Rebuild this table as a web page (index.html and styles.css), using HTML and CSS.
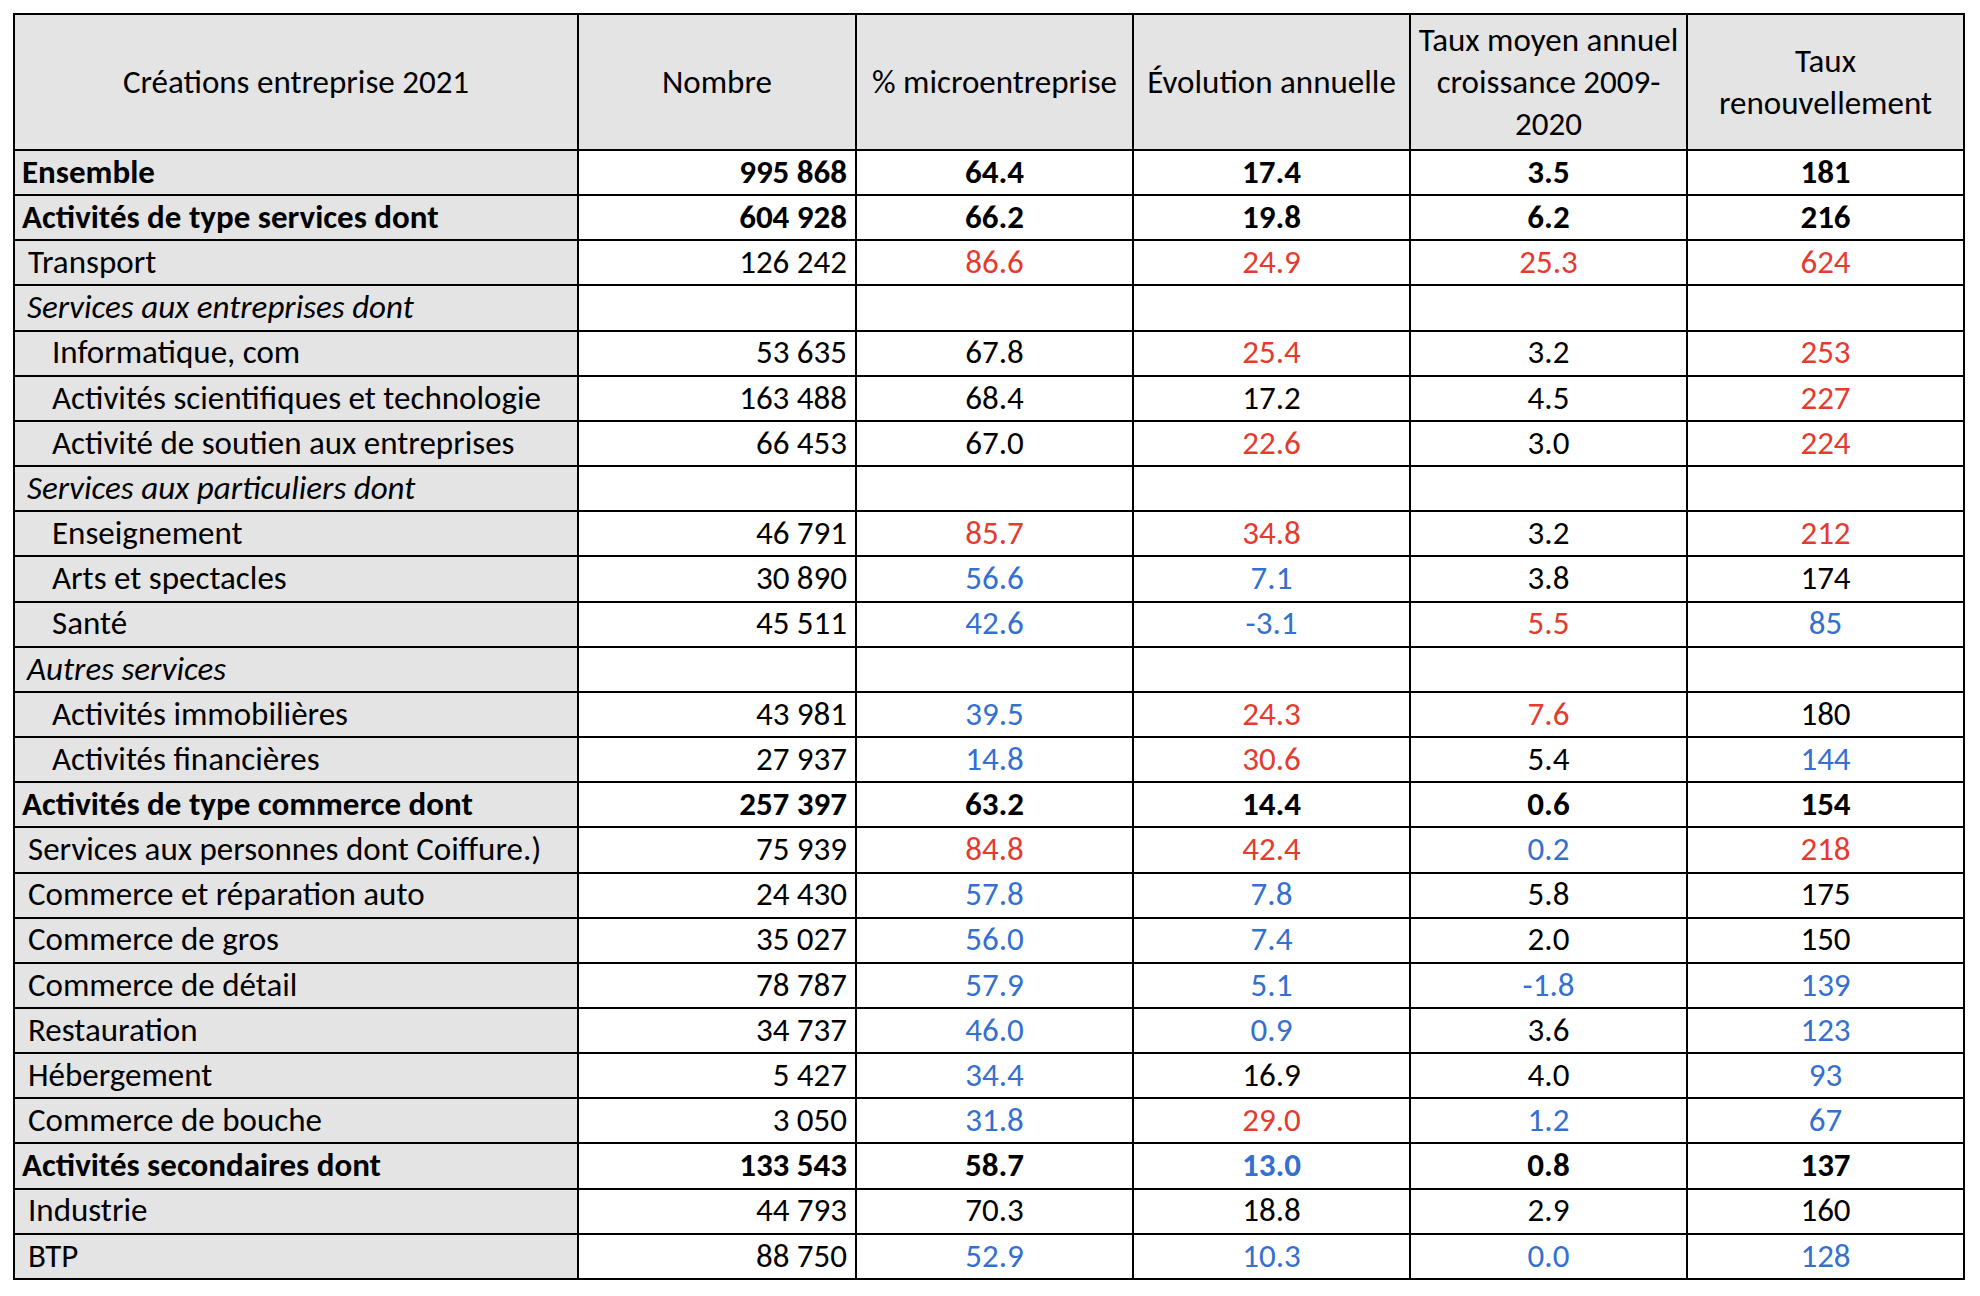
FILE: index.html
```html
<!DOCTYPE html>
<html lang="fr">
<head>
<meta charset="utf-8">
<title>Créations entreprise 2021</title>
<link rel="stylesheet" href="styles.css">
</head>
<body>
<table class="stats">
  <colgroup>
    <col class="c-label">
    <col class="c-num">
    <col class="c-val">
    <col class="c-val">
    <col class="c-val">
    <col class="c-val">
  </colgroup>
  <thead>
    <tr>
      <th>Créations entreprise 2021</th>
      <th>Nombre</th>
      <th>% microentreprise</th>
      <th>Évolution annuelle</th>
      <th>Taux moyen annuel<br>croissance 2009-<br>2020</th>
      <th>Taux<br>renouvellement</th>
    </tr>
  </thead>
  <tbody>
    <tr class="bold"><td class="lbl">Ensemble</td><td class="num">995 868</td><td>64.4</td><td>17.4</td><td>3.5</td><td>181</td></tr>
    <tr class="bold"><td class="lbl">Activités de type services dont</td><td class="num">604 928</td><td>66.2</td><td>19.8</td><td>6.2</td><td>216</td></tr>
    <tr><td class="lbl top">Transport</td><td class="num">126 242</td><td class="r">86.6</td><td class="r">24.9</td><td class="r">25.3</td><td class="r">624</td></tr>
    <tr class="group"><td class="lbl grp">Services aux entreprises dont</td><td></td><td></td><td></td><td></td><td></td></tr>
    <tr><td class="lbl sub">Informatique, com</td><td class="num">53 635</td><td>67.8</td><td class="r">25.4</td><td>3.2</td><td class="r">253</td></tr>
    <tr><td class="lbl sub">Activités scientifiques et technologie</td><td class="num">163 488</td><td>68.4</td><td>17.2</td><td>4.5</td><td class="r">227</td></tr>
    <tr><td class="lbl sub">Activité de soutien aux entreprises</td><td class="num">66 453</td><td>67.0</td><td class="r">22.6</td><td>3.0</td><td class="r">224</td></tr>
    <tr class="group"><td class="lbl grp">Services aux particuliers dont</td><td></td><td></td><td></td><td></td><td></td></tr>
    <tr><td class="lbl sub">Enseignement</td><td class="num">46 791</td><td class="r">85.7</td><td class="r">34.8</td><td>3.2</td><td class="r">212</td></tr>
    <tr><td class="lbl sub">Arts et spectacles</td><td class="num">30 890</td><td class="b">56.6</td><td class="b">7.1</td><td>3.8</td><td>174</td></tr>
    <tr><td class="lbl sub">Santé</td><td class="num">45 511</td><td class="b">42.6</td><td class="b">-3.1</td><td class="r">5.5</td><td class="b">85</td></tr>
    <tr class="group"><td class="lbl grp">Autres services</td><td></td><td></td><td></td><td></td><td></td></tr>
    <tr><td class="lbl sub">Activités immobilières</td><td class="num">43 981</td><td class="b">39.5</td><td class="r">24.3</td><td class="r">7.6</td><td>180</td></tr>
    <tr><td class="lbl sub">Activités financières</td><td class="num">27 937</td><td class="b">14.8</td><td class="r">30.6</td><td>5.4</td><td class="b">144</td></tr>
    <tr class="bold"><td class="lbl">Activités de type commerce dont</td><td class="num">257 397</td><td>63.2</td><td>14.4</td><td>0.6</td><td>154</td></tr>
    <tr><td class="lbl top">Services aux personnes dont Coiffure.)</td><td class="num">75 939</td><td class="r">84.8</td><td class="r">42.4</td><td class="b">0.2</td><td class="r">218</td></tr>
    <tr><td class="lbl top">Commerce et réparation auto</td><td class="num">24 430</td><td class="b">57.8</td><td class="b">7.8</td><td>5.8</td><td>175</td></tr>
    <tr><td class="lbl top">Commerce de gros</td><td class="num">35 027</td><td class="b">56.0</td><td class="b">7.4</td><td>2.0</td><td>150</td></tr>
    <tr><td class="lbl top">Commerce de détail</td><td class="num">78 787</td><td class="b">57.9</td><td class="b">5.1</td><td class="b">-1.8</td><td class="b">139</td></tr>
    <tr><td class="lbl top">Restauration</td><td class="num">34 737</td><td class="b">46.0</td><td class="b">0.9</td><td>3.6</td><td class="b">123</td></tr>
    <tr><td class="lbl top">Hébergement</td><td class="num">5 427</td><td class="b">34.4</td><td>16.9</td><td>4.0</td><td class="b">93</td></tr>
    <tr><td class="lbl top">Commerce de bouche</td><td class="num">3 050</td><td class="b">31.8</td><td class="r">29.0</td><td class="b">1.2</td><td class="b">67</td></tr>
    <tr class="bold"><td class="lbl">Activités secondaires dont</td><td class="num">133 543</td><td>58.7</td><td class="b">13.0</td><td>0.8</td><td>137</td></tr>
    <tr><td class="lbl top">Industrie</td><td class="num">44 793</td><td>70.3</td><td>18.8</td><td>2.9</td><td>160</td></tr>
    <tr><td class="lbl top">BTP</td><td class="num">88 750</td><td class="b">52.9</td><td class="b">10.3</td><td class="b">0.0</td><td class="b">128</td></tr>
  </tbody>
</table>
</body>
</html>
```

FILE: styles.css
```css
html, body {
  margin: 0;
  padding: 0;
  background: #ffffff;
}

body {
  padding: 13px 0 0 13px;
  font-family: Carlito, Lato, "Liberation Sans", sans-serif;
  font-size: 33px;
  color: #000000;
}

.stats {
  border-collapse: collapse;
  table-layout: fixed;
  width: 1952px;
}

.c-label { width: 564px; }
.c-num { width: 278px; }
.c-val { width: 277px; }

.stats th,
.stats td {
  border: 2px solid #000000;
  padding: 0 8px;
  line-height: 1.2;
  white-space: nowrap;
  overflow: hidden;
  text-align: center;
  vertical-align: middle;
}

.stats thead tr {
  height: 136px;
}

.stats th {
  background: #e4e4e4;
  font-weight: normal;
  line-height: 42px;
  padding: 0 2px;
}

.stats tbody tr {
  height: 45.16px;
}

.stats td.lbl {
  background: #e4e4e4;
  text-align: left;
  padding-left: 7px;
}

.stats td.top {
  padding-left: 13px;
}

.stats td.grp {
  font-style: italic;
  padding-left: 12px;
}

.stats td.sub {
  padding-left: 37px;
}

.stats td.num {
  text-align: right;
  padding-right: 8px;
}

.stats tr.bold td {
  font-weight: bold;
}

.r { color: #e53a2e; }
.b { color: #3470cf; }
```
